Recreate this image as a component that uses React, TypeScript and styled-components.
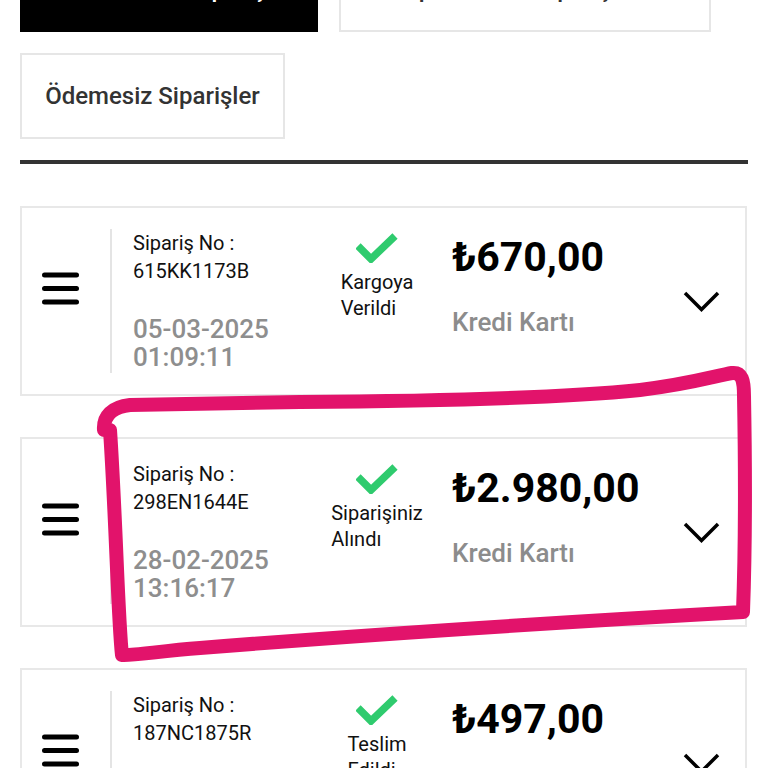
import React from 'react';
import styled, { createGlobalStyle } from 'styled-components';

const GlobalStyle = createGlobalStyle`
  html, body {
    margin: 0;
    padding: 0;
    background: #ffffff;
    overflow: hidden;
  }
  body {
    font-family: Roboto, "Liberation Sans", Arial, sans-serif;
    color: #111111;
  }
`;

const Shell = styled.div`
  position: relative;
  display: flow-root;
  padding: 0 20px;
`;

const FilterGroup = styled.div`
  display: flex;
  flex-wrap: wrap;
  gap: 21px;
  margin-top: -54px;
`;

const FilterButton = styled.div<{ $active?: boolean; $width: number }>`
  box-sizing: border-box;
  width: ${({ $width }) => $width}px;
  height: 86px;
  display: flex;
  align-items: center;
  justify-content: center;
  padding: 0 18px;
  font-size: 24px;
  font-weight: 500;
  white-space: nowrap;
  background: ${({ $active }) => ($active ? '#000000' : '#ffffff')};
  color: ${({ $active }) => ($active ? '#ffffff' : '#333333')};
  border: 2px solid ${({ $active }) => ($active ? '#000000' : '#e6e6e6')};
`;

const Divider = styled.div`
  height: 4px;
  margin-top: 21px;
  background: #333333;
`;

const OrderList = styled.div`
  display: flex;
  flex-direction: column;
  gap: 41px;
  margin-top: 42px;
`;

const OrderCard = styled.div`
  box-sizing: border-box;
  width: 727px;
  height: 190px;
  display: flex;
  align-items: stretch;
  padding: 21px 0;
  border: 2px solid #e8e8e8;
  background: #ffffff;
`;

const MenuCell = styled.div`
  box-sizing: border-box;
  width: 88px;
  padding: 0 0 26px 20px;
  display: flex;
  align-items: center;
`;

const InfoCell = styled.div`
  box-sizing: border-box;
  width: 221px;
  padding-left: 21px;
  border-left: 2px solid #e4e4e4;
  display: flex;
  flex-direction: column;
`;

const OrderLine = styled.div`
  font-size: 20px;
  line-height: 28px;
  color: #111111;
`;

const DateText = styled.div`
  margin-top: 30px;
  font-size: 26px;
  font-weight: 500;
  line-height: 28px;
  color: #8e8e8e;
`;

const StatusCell = styled.div`
  width: 92px;
  display: flex;
  flex-direction: column;
  align-items: center;
`;

const CheckIcon = styled.svg`
  display: block;
  margin-top: 4px;
`;

const StatusText = styled.div`
  margin-top: 6px;
  font-size: 20px;
  line-height: 26px;
  color: #111111;
  text-align: left;
`;

const PriceCell = styled.div`
  flex: 1;
  margin-left: 29px;
  display: flex;
  flex-direction: column;
`;

const Amount = styled.div`
  margin-top: 5px;
  font-size: 41px;
  font-weight: 700;
  line-height: 46px;
  color: #000000;
`;

const Payment = styled.div`
  margin-top: 27px;
  font-size: 26px;
  font-weight: 500;
  line-height: 30px;
  color: #8c8c8c;
`;

const ChevronCell = styled.div`
  display: flex;
  align-items: center;
  margin-right: 25px;
`;

const Annotation = styled.svg`
  position: absolute;
  top: 0;
  left: 0;
  pointer-events: none;
`;

type Order = {
  no: string;
  date: string;
  time: string;
  status: [string, string];
  amount: string;
  payment: string;
};

const orders: Order[] = [
  { no: '615KK1173B', date: '05-03-2025', time: '01:09:11', status: ['Kargoya', 'Verildi'], amount: '₺670,00', payment: 'Kredi Kartı' },
  { no: '298EN1644E', date: '28-02-2025', time: '13:16:17', status: ['Siparişiniz', 'Alındı'], amount: '₺2.980,00', payment: 'Kredi Kartı' },
  { no: '187NC1875R', date: '21-02-2025', time: '10:42:03', status: ['Teslim', 'Edildi'], amount: '₺497,00', payment: 'Kredi Kartı' },
];

const MenuIcon = () => (
  <svg width="37" height="33" viewBox="0 0 37 33">
    <rect x="0" y="0.5" width="37" height="5" rx="2.5" fill="#000" />
    <rect x="0" y="14" width="37" height="5" rx="2.5" fill="#000" />
    <rect x="0" y="27.5" width="37" height="5" rx="2.5" fill="#000" />
  </svg>
);

const Check = () => (
  <CheckIcon width="42" height="30" viewBox="0 0 42 30">
    <polyline points="2,13 15,26 39,3" fill="none" stroke="#2fcb6e" strokeWidth="7.5" />
  </CheckIcon>
);

const Chevron = () => (
  <svg width="37" height="21" viewBox="0 0 37 21">
    <polyline points="2,2 18.5,18.5 35,2" fill="none" stroke="#000" strokeWidth="3.5" />
  </svg>
);

const App: React.FC = () => {
  return (
    <>
      <GlobalStyle />
      <Shell>
        <FilterGroup>
          <FilterButton $active $width={298}>Tamamlanan Siparişler</FilterButton>
          <FilterButton $width={372}>İptal Edilen Siparişler</FilterButton>
          <FilterButton $width={265}>Ödemesiz Siparişler</FilterButton>
        </FilterGroup>
        <Divider />
        <OrderList>
          {orders.map((order) => (
            <OrderCard key={order.no}>
              <MenuCell>
                <MenuIcon />
              </MenuCell>
              <InfoCell>
                <OrderLine>Sipariş No :</OrderLine>
                <OrderLine>{order.no}</OrderLine>
                <DateText>
                  {order.date}
                  <br />
                  {order.time}
                </DateText>
              </InfoCell>
              <StatusCell>
                <Check />
                <StatusText>
                  {order.status[0]}
                  <br />
                  {order.status[1]}
                </StatusText>
              </StatusCell>
              <PriceCell>
                <Amount>{order.amount}</Amount>
                <Payment>{order.payment}</Payment>
              </PriceCell>
              <ChevronCell>
                <Chevron />
              </ChevronCell>
            </OrderCard>
          ))}
        </OrderList>
        <Annotation width="768" height="768" viewBox="0 0 768 768">
          <path
            d="M104 430 C103 416 112 407 130 405 L300 402 C450 401 560 398 640 390 C690 384 715 376 732 373 C742 372 744 380 744 396 C745 450 746 530 743 612 C600 620 400 632 200 648 C160 651 132 656 122 655 C118 620 116 520 110 430"
            fill="none"
            stroke="#e2136b"
            strokeWidth="14"
            strokeLinecap="round"
            strokeLinejoin="round"
          />
        </Annotation>
      </Shell>
    </>
  );
};

export default App;
